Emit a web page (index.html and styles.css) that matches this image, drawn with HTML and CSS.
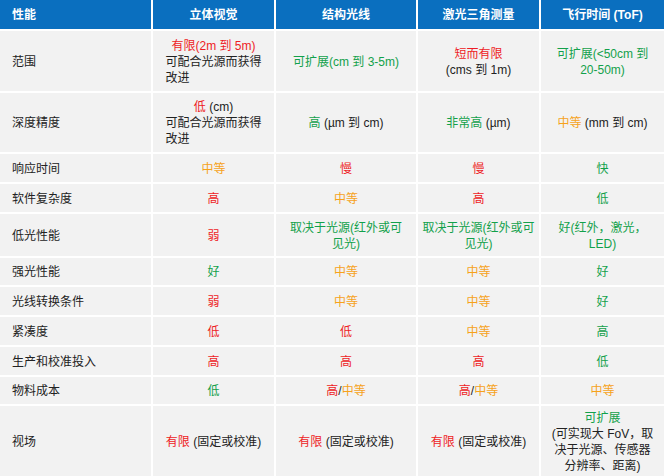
FILE: index.html
```html
<!DOCTYPE html>
<html lang="zh-CN">
<head>
<meta charset="utf-8">
<title>3D 传感技术对比</title>
<link rel="stylesheet" href="styles.css">
</head>
<body>
<div class="grid">
  <div class="c hd first">性能</div>
  <div class="c hd">立体视觉</div>
  <div class="c hd">结构光线</div>
  <div class="c hd">激光三角测量</div>
  <div class="c hd">飞行时间 (ToF)</div>

  <div class="c first r1">范围</div>
  <div class="c"><div><span class="red">有限(2m 到 5m)</span><br><span class="left">可配合光源而获得<br>改进</span></div></div>
  <div class="c"><span class="green">可扩展(cm 到 3-5m)</span></div>
  <div class="c"><div><span class="red">短而有限</span><br>(cms 到 1m)</div></div>
  <div class="c"><span class="green">可扩展(&lt;50cm 到<br>20-50m)</span></div>

  <div class="c first">深度精度</div>
  <div class="c"><div><span class="red">低</span> (cm)<br><span class="left">可配合光源而获得<br>改进</span></div></div>
  <div class="c"><span><span class="green">高</span> (µm 到 cm)</span></div>
  <div class="c"><span><span class="green">非常高</span> (µm)</span></div>
  <div class="c"><span><span class="orange">中等</span> (mm 到 cm)</span></div>

  <div class="c first">响应时间</div>
  <div class="c orange">中等</div>
  <div class="c red">慢</div>
  <div class="c red">慢</div>
  <div class="c green">快</div>

  <div class="c first">软件复杂度</div>
  <div class="c red">高</div>
  <div class="c orange">中等</div>
  <div class="c red">高</div>
  <div class="c green">低</div>

  <div class="c first">低光性能</div>
  <div class="c red">弱</div>
  <div class="c green">取决于光源(红外或可<br>见光)</div>
  <div class="c green">取决于光源(红外或可<br>见光)</div>
  <div class="c green">好(红外，激光，<br>LED)</div>

  <div class="c first">强光性能</div>
  <div class="c green">好</div>
  <div class="c orange">中等</div>
  <div class="c orange">中等</div>
  <div class="c green">好</div>

  <div class="c first">光线转换条件</div>
  <div class="c red">弱</div>
  <div class="c orange">中等</div>
  <div class="c orange">中等</div>
  <div class="c green">好</div>

  <div class="c first">紧凑度</div>
  <div class="c red">低</div>
  <div class="c red">低</div>
  <div class="c orange">中等</div>
  <div class="c green">高</div>

  <div class="c first">生产和校准投入</div>
  <div class="c red">高</div>
  <div class="c red">高</div>
  <div class="c red">高</div>
  <div class="c green">低</div>

  <div class="c first">物料成本</div>
  <div class="c green">低</div>
  <div class="c"><span><span class="red">高</span>/<span class="orange">中等</span></span></div>
  <div class="c"><span><span class="red">高</span>/<span class="orange">中等</span></span></div>
  <div class="c orange">中等</div>

  <div class="c first">视场</div>
  <div class="c"><span><span class="red">有限</span> (固定或校准)</span></div>
  <div class="c"><span><span class="red">有限</span> (固定或校准)</span></div>
  <div class="c"><span><span class="red">有限</span> (固定或校准)</span></div>
  <div class="c"><div><span class="green">可扩展</span><br>(可实现大 FoV，取<br>决于光源、传感器<br>分辨率、距离)</div></div>
</div>
</body>
</html>
```

FILE: styles.css
```css
html, body {
  margin: 0;
  padding: 0;
  background: #ffffff;
}

body {
  font-family: "Liberation Sans", Arial, "Noto Sans CJK SC", sans-serif;
  font-size: 12px;
  line-height: 16px;
  color: #222222;
}

.grid {
  display: grid;
  width: 664px;
  grid-template-columns: 151px 121px 140px 121px 123px;
  grid-template-rows: 29px 60px 59px 28px 28px 42px 27px 28px 28px 28px 27px 70px;
  gap: 2px;
  background: #ffffff;
}

.c {
  background: #f2f2f2;
  display: flex;
  align-items: center;
  justify-content: center;
  text-align: center;
  padding: 1px 0 0;
  box-sizing: border-box;
  white-space: nowrap;
}

.c.first {
  justify-content: flex-start;
  text-align: left;
  padding-left: 12px;
}

.hd {
  background: #0a6fbf;
  color: #ffffff;
  font-weight: bold;
}

.left {
  display: inline-block;
  text-align: left;
}

.red { color: #ee1c25; }
.green { color: #12a14b; }
.orange { color: #f6a21b; }
```
